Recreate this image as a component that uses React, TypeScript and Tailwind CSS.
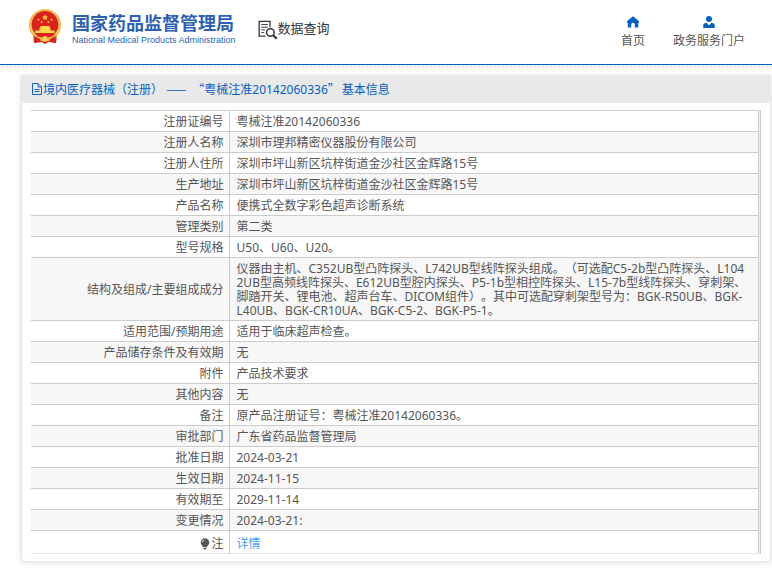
import type { ReactNode } from "react";

interface RecordRow {
  label: string;
  value: ReactNode;
}

const composition = [
  "仪器由主机、C352UB型凸阵探头、L742UB型线阵探头组成。（可选配C5-2b型凸阵探头、L104",
  "2UB型高频线阵探头、E612UB型腔内探头、P5-1b型相控阵探头、L15-7b型线阵探头、穿刺架、",
  "脚踏开关、锂电池、超声台车、DICOM组件）。其中可选配穿刺架型号为：BGK-R50UB、BGK-",
  "L40UB、BGK-CR10UA、BGK-C5-2、BGK-P5-1。",
].join("\n");

const rows: RecordRow[] = [
  { label: "注册证编号", value: "粤械注准20142060336" },
  { label: "注册人名称", value: "深圳市理邦精密仪器股份有限公司" },
  { label: "注册人住所", value: "深圳市坪山新区坑梓街道金沙社区金辉路15号" },
  { label: "生产地址", value: "深圳市坪山新区坑梓街道金沙社区金辉路15号" },
  { label: "产品名称", value: "便携式全数字彩色超声诊断系统" },
  { label: "管理类别", value: "第二类" },
  { label: "型号规格", value: "U50、U60、U20。" },
  { label: "结构及组成/主要组成成分", value: composition },
  { label: "适用范围/预期用途", value: "适用于临床超声检查。" },
  { label: "产品储存条件及有效期", value: "无" },
  { label: "附件", value: "产品技术要求" },
  { label: "其他内容", value: "无" },
  { label: "备注", value: "原产品注册证号：粤械注准20142060336。" },
  { label: "审批部门", value: "广东省药品监督管理局" },
  { label: "批准日期", value: "2024-03-21" },
  { label: "生效日期", value: "2024-11-15" },
  { label: "有效期至", value: "2029-11-14" },
  { label: "变更情况", value: "2024-03-21:" },
];

function Emblem() {
  return (
    <svg viewBox="0 0 32 36" className="h-9 w-8" aria-hidden="true">
      <path d="M4 25 L5 34 L11 32 L16 35 L21 32 L27 34 L28 25Z" fill="#d8201c" />
      <circle cx="16" cy="16" r="16" fill="#e9b53c" />
      <circle cx="16" cy="16" r="14.6" fill="#f4cf62" />
      <circle cx="16" cy="15.400" r="13.400" fill="#dc211c" />
      <path
        d="M16 5.500l.9 1.900 2.100.2-1.600 1.400.5 2.100-1.900-1.100-1.900 1.100.5-2.100L13 7.600l2.100-.2z"
        fill="#ffd94a"
      />
      <g fill="#ffd94a">
        <circle cx="9.4" cy="10.8" r="1" />
        <circle cx="22.6" cy="10.8" r="1" />
        <circle cx="12.6" cy="13" r=".9" />
        <circle cx="19.4" cy="13" r=".9" />
        <path d="M10.500 19.200l1.400-2.200h8.200l1.400 2.200v2.300h4.200v2.400H6.300v-2.400h4.200z" />
      </g>
      <path d="M6 24.500h20l-2.500 3h-15z" fill="#dc211c" />
      <path
        d="M3 25c4 5 8 3 10 5a3 3 0 0 1 6 0c2-2 6 0 10-5l-3 6-7 1-3 1-3-1-7-1z"
        fill="#f0b93a"
      />
      <path d="M5 27l6 3 1 3-6 1zM27 27l-6 3-1 3 6 1z" fill="#d8201c" />
      <circle cx="16" cy="30" r="2" fill="#f6d566" />
    </svg>
  );
}

function SearchDocIcon() {
  return (
    <svg
      viewBox="0 0 21 20"
      className="h-5 w-5"
      fill="none"
      stroke="#34343f"
      aria-hidden="true"
    >
      <path d="M8 16.400H1.200V1H12.600V7" strokeWidth="1.4" />
      <path d="M3.400 4.300h7M3.400 7.100h7M3.400 9.900h4M3.400 12.700h3" strokeWidth="1" />
      <circle cx="13" cy="12.6" r="4" strokeWidth="1.6" />
      <path d="M15.900 15.600l3.800 3.600" strokeWidth="2.2" />
    </svg>
  );
}

function HomeIcon() {
  return (
    <svg viewBox="0 0 12 12" className="h-3 w-3" fill="#0560c4" aria-hidden="true">
      <path d="M6 .3L0 5.200v1.500h.8V11.500h3.400V8.600a1.800 1.800 0 0 1 3.600 0v2.900h3.400V6.700h.8V5.200z" />
    </svg>
  );
}

function UserIcon() {
  return (
    <svg viewBox="0 0 12 12" className="h-3 w-3" fill="#0560c4" aria-hidden="true">
      <circle cx="6" cy="3" r="3" />
      <path d="M.2 12V9.400C.2 7.800 2 7 3.600 6.800L6 9.600l2.400-2.800c1.600.2 3.400 1 3.400 2.600V12z" />
    </svg>
  );
}

function DocIcon() {
  return (
    <svg
      viewBox="0 0 12 12"
      className="h-3 w-3"
      fill="none"
      stroke="#1a62c0"
      aria-hidden="true"
    >
      <path d="M1.500 .5h5.500L10.500 4V11.500h-9zM7 .5V4h3.500" />
      <path d="M3.500 6.500h5M3.500 8.500h5" />
    </svg>
  );
}

function BulbIcon() {
  return (
    <svg viewBox="0 0 10 12" className="h-3 w-3" aria-hidden="true">
      <path
        d="M5 .3a4.300 4.300 0 0 1 4.300 4.300C9.300 6.700 7.500 7.600 7 9.200H3C2.500 7.600.7 6.700.7 4.600A4.300 4.300 0 0 1 5 .3z"
        fill="#555"
      />
      <path d="M3.400 10h3.200L5.800 11.600H4.200z" fill="#555" />
      <path d="M2.200 4.400A2.600 2.600 0 0 1 4.400 2" stroke="#fff" strokeWidth=".8" fill="none" />
    </svg>
  );
}

function Header() {
  return (
    <header>
      <div className="box-content flex h-16 items-start justify-between border-b border-[#0560c4] pr-[27px] pl-[29px]">
        <div className="flex items-start">
          <a href="#home" className="flex items-start gap-[11px] pt-[9px]">
            <Emblem />
            <span className="flex flex-col pt-[3px] text-[#2d5fb3]">
              <span className="text-lg leading-[22px] font-bold">国家药品监督管理局</span>
              <span className="font-['Liberation_Sans',sans-serif] text-[9px] leading-3">
                National Medical Products Administration
              </span>
            </span>
          </a>
          <a
            href="#search"
            className="ml-[22px] flex items-start pt-5 text-[13px] leading-4 text-[#34343f]"
          >
            <SearchDocIcon />
            数据查询
          </a>
        </div>
        <nav className="flex gap-7 pt-4 text-[#555]">
          <a href="#home" className="flex flex-col items-center gap-[5px]">
            <HomeIcon />
            <span className="leading-4">首页</span>
          </a>
          <a href="#portal" className="flex flex-col items-center gap-[5px]">
            <UserIcon />
            <span className="leading-4">政务服务门户</span>
          </a>
        </nav>
      </div>
      <div className="h-[3px] bg-[repeating-conic-gradient(#e6e6e6_0_25%,#fff_0_50%)] bg-[length:4px_4px]" />
    </header>
  );
}

export default function App() {
  return (
    <div className="min-h-screen bg-white font-['Noto_Sans','Noto_Sans_CJK_SC',sans-serif] text-xs text-[#555] [text-spacing-trim:space-all]">
      <Header />
      <main className="mt-[7px] mr-px ml-[21px] border border-t-0 border-[#e6e6e6] pb-[7px] shadow-[0_1px_6px_rgba(0,0,0,0.12)]">
        <h1 className="flex h-7 items-center bg-[#e9e9e9] pl-[9px] text-[#0560c4]">
          <DocIcon />
          <span className="whitespace-pre">
            境内医疗器械（注册）{" "}
            <span className="mr-1.5 font-['Noto_Sans_CJK_SC',sans-serif]">——</span>
            <span className="font-['Noto_Sans_CJK_SC',sans-serif]">“</span>
            粤械注准20142060336
            <span className="mr-0.5 font-['Noto_Sans_CJK_SC',sans-serif]">”</span>
            基本信息
          </span>
        </h1>
        <div className="mt-[7px] mr-[9px] ml-[9px] border-r border-[#c8ccd0] bg-[#eee] pr-px">
          <table className="w-full border-collapse border-r border-[#ccc] bg-white leading-[14px]">
            <tbody>
              {rows.map(({ label, value }) => (
                <tr key={label} className="border-t border-[#ccc] even:bg-[#f7f7f7]">
                  <th
                    scope="row"
                    className="w-[198px] border-r border-[#ccc] pt-1 pr-[5px] pb-0.5 text-right font-normal"
                  >
                    {label}
                  </th>
                  <td className="pt-1 pr-1 pb-0.5 pl-[7px] whitespace-pre-line">{value}</td>
                </tr>
              ))}
              <tr className="border-t border-b border-t-[#ccc] border-b-[#e6e8f0]">
                <th
                  scope="row"
                  className="border-r border-[#ccc] pt-1.5 pr-[5px] pb-0.5 font-normal"
                >
                  <span className="flex items-center justify-end">
                    <BulbIcon />注
                  </span>
                </th>
                <td className="pt-1.5 pr-1 pb-0.5 pl-[7px]">
                  <a href="#detail" className="text-[#409eff]">
                    详情
                  </a>
                </td>
              </tr>
            </tbody>
          </table>
        </div>
      </main>
    </div>
  );
}
